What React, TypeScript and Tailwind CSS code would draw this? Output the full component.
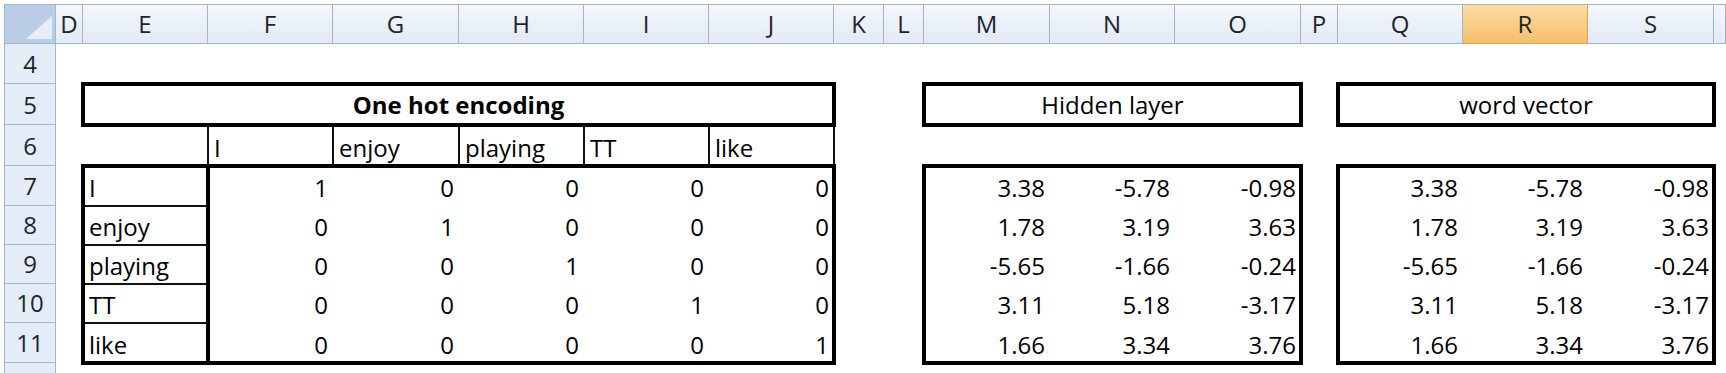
import React from "react";

const COL = [
  "",
  "col-start-1",
  "col-start-2",
  "col-start-3",
  "col-start-4",
  "col-start-5",
  "col-start-6",
  "col-start-7",
  "col-start-8",
  "col-start-9",
  "col-start-10",
  "col-start-11",
  "col-start-12",
  "col-start-13",
  "col-start-14",
  "col-start-15",
  "col-start-16",
  "col-start-17",
  "col-start-18",
];
const ROW = [
  "",
  "row-start-1",
  "row-start-2",
  "row-start-3",
  "row-start-4",
  "row-start-5",
  "row-start-6",
  "row-start-7",
  "row-start-8",
  "row-start-9",
  "row-start-10",
];

const HEADERS = ["D", "E", "F", "G", "H", "I", "J", "K", "L", "M", "N", "O", "P", "Q", "R", "S", ""];
const ROWNUMS = ["4", "5", "6", "7", "8", "9", "10", "11", ""];
const WORDS = ["I", "enjoy", "playing", "TT", "like"];
const VEC = [
  ["3.38", "-5.78", "-0.98"],
  ["1.78", "3.19", "3.63"],
  ["-5.65", "-1.66", "-0.24"],
  ["3.11", "5.18", "-3.17"],
  ["1.66", "3.34", "3.76"],
];

const thick = "relative z-10 border-4 border-black -m-[2px] pointer-events-none";
const thin = "border-2 border-[#111] -m-px";

function Corner() {
  return (
    <div className="relative col-start-1 row-start-1 bg-[#b9cde6] border-r border-b border-[#9eb6ce]">
      <svg className="absolute right-[3px] bottom-[4px]" width="26" height="23" viewBox="0 0 26 23">
        <polygon points="26,0 26,23 0,23" fill="#e6edf7" />
      </svg>
    </div>
  );
}

export default function App() {
  return (
    <div className="w-[1726px] h-[373px] overflow-hidden bg-white pt-[4px] pl-[4px] font-[family-name:'Open_Sans',sans-serif] text-[24px] text-black">
      <div className="grid grid-cols-[51px_27px_125px_125px_126px_125px_125px_125px_50px_40px_126px_125px_126px_37px_125px_125px_126px_1fr] grid-rows-[39px_40px_41px_41px_40px_39px_39px_39px_40px_40px] border-t border-l border-[#9eb6ce]">
        <Corner />
        {HEADERS.map((h, i) => (
          <div
            key={"h" + i}
            className={
              (h === "R"
                ? "bg-linear-to-b from-[#fbdba3] to-[#f4c06a] border-r border-b border-[#f0a040] "
                : "bg-linear-to-b from-[#f4f7fc] to-[#e2eaf5] border-r border-b border-[#9eb6ce] ") +
              "row-start-1 " +
              COL[i + 2] +
              " flex items-end justify-center pb-[7px] leading-none text-[#1c2430]"
            }
          >
            {h}
          </div>
        ))}
        {ROWNUMS.map((n, i) => (
          <div
            key={"r" + i}
            className={
              "col-start-1 " +
              ROW[i + 2] +
              " bg-[#e4ecf7] border-r border-b border-[#9eb6ce] flex items-end justify-center pb-[7px] leading-none text-[#1c2430]"
            }
          >
            {n}
          </div>
        ))}

        {/* One hot encoding: header row 6 */}
        {WORDS.map((w, i) => (
          <div
            key={"w6" + i}
            className={"row-start-4 " + COL[i + 4] + " " + thin + " flex items-end pl-[5px] pb-[5px] leading-none"}
          >
            {w}
          </div>
        ))}
        {/* Row labels E7:E11 */}
        {WORDS.map((w, i) => (
          <div
            key={"we" + i}
            className={"col-start-3 " + ROW[i + 5] + " " + thin + " flex items-end pl-[5px] pb-[5px] leading-none"}
          >
            {w}
          </div>
        ))}
        {/* identity values */}
        {WORDS.map((_, r) =>
          WORDS.map((__, c) => (
            <div
              key={"v" + r + "-" + c}
              className={COL[c + 4] + " " + ROW[r + 5] + " flex items-end justify-end pr-[5px] pb-[6px] leading-none"}
            >
              {r === c ? "1" : "0"}
            </div>
          ))
        )}
        {/* hidden layer values */}
        {VEC.map((row, r) =>
          row.map((v, c) => (
            <div
              key={"hv" + r + "-" + c}
              className={COL[c + 11] + " " + ROW[r + 5] + " flex items-end justify-end pr-[5px] pb-[6px] leading-none"}
            >
              {v}
            </div>
          ))
        )}
        {/* word vector values */}
        {VEC.map((row, r) =>
          row.map((v, c) => (
            <div
              key={"wv" + r + "-" + c}
              className={COL[c + 15] + " " + ROW[r + 5] + " flex items-end justify-end pr-[5px] pb-[6px] leading-none"}
            >
              {v}
            </div>
          ))
        )}

        {/* Thick boxes */}
        <div className={"col-start-3 col-span-6 row-start-3 " + thick + " flex items-end justify-center pb-[6px] leading-none font-bold"}>
          One hot encoding
        </div>
        <div className={"col-start-3 row-start-5 row-span-5 " + thick} />
        <div className={"col-start-4 col-span-5 row-start-5 row-span-5 " + thick} />

        <div className={"col-start-11 col-span-3 row-start-3 " + thick + " flex items-end justify-center pb-[6px] leading-none"}>
          Hidden layer
        </div>
        <div className={"col-start-11 col-span-3 row-start-5 row-span-5 " + thick} />

        <div className={"col-start-15 col-span-3 row-start-3 " + thick + " flex items-end justify-center pb-[6px] leading-none"}>
          word vector
        </div>
        <div className={"col-start-15 col-span-3 row-start-5 row-span-5 " + thick} />
      </div>
    </div>
  );
}
